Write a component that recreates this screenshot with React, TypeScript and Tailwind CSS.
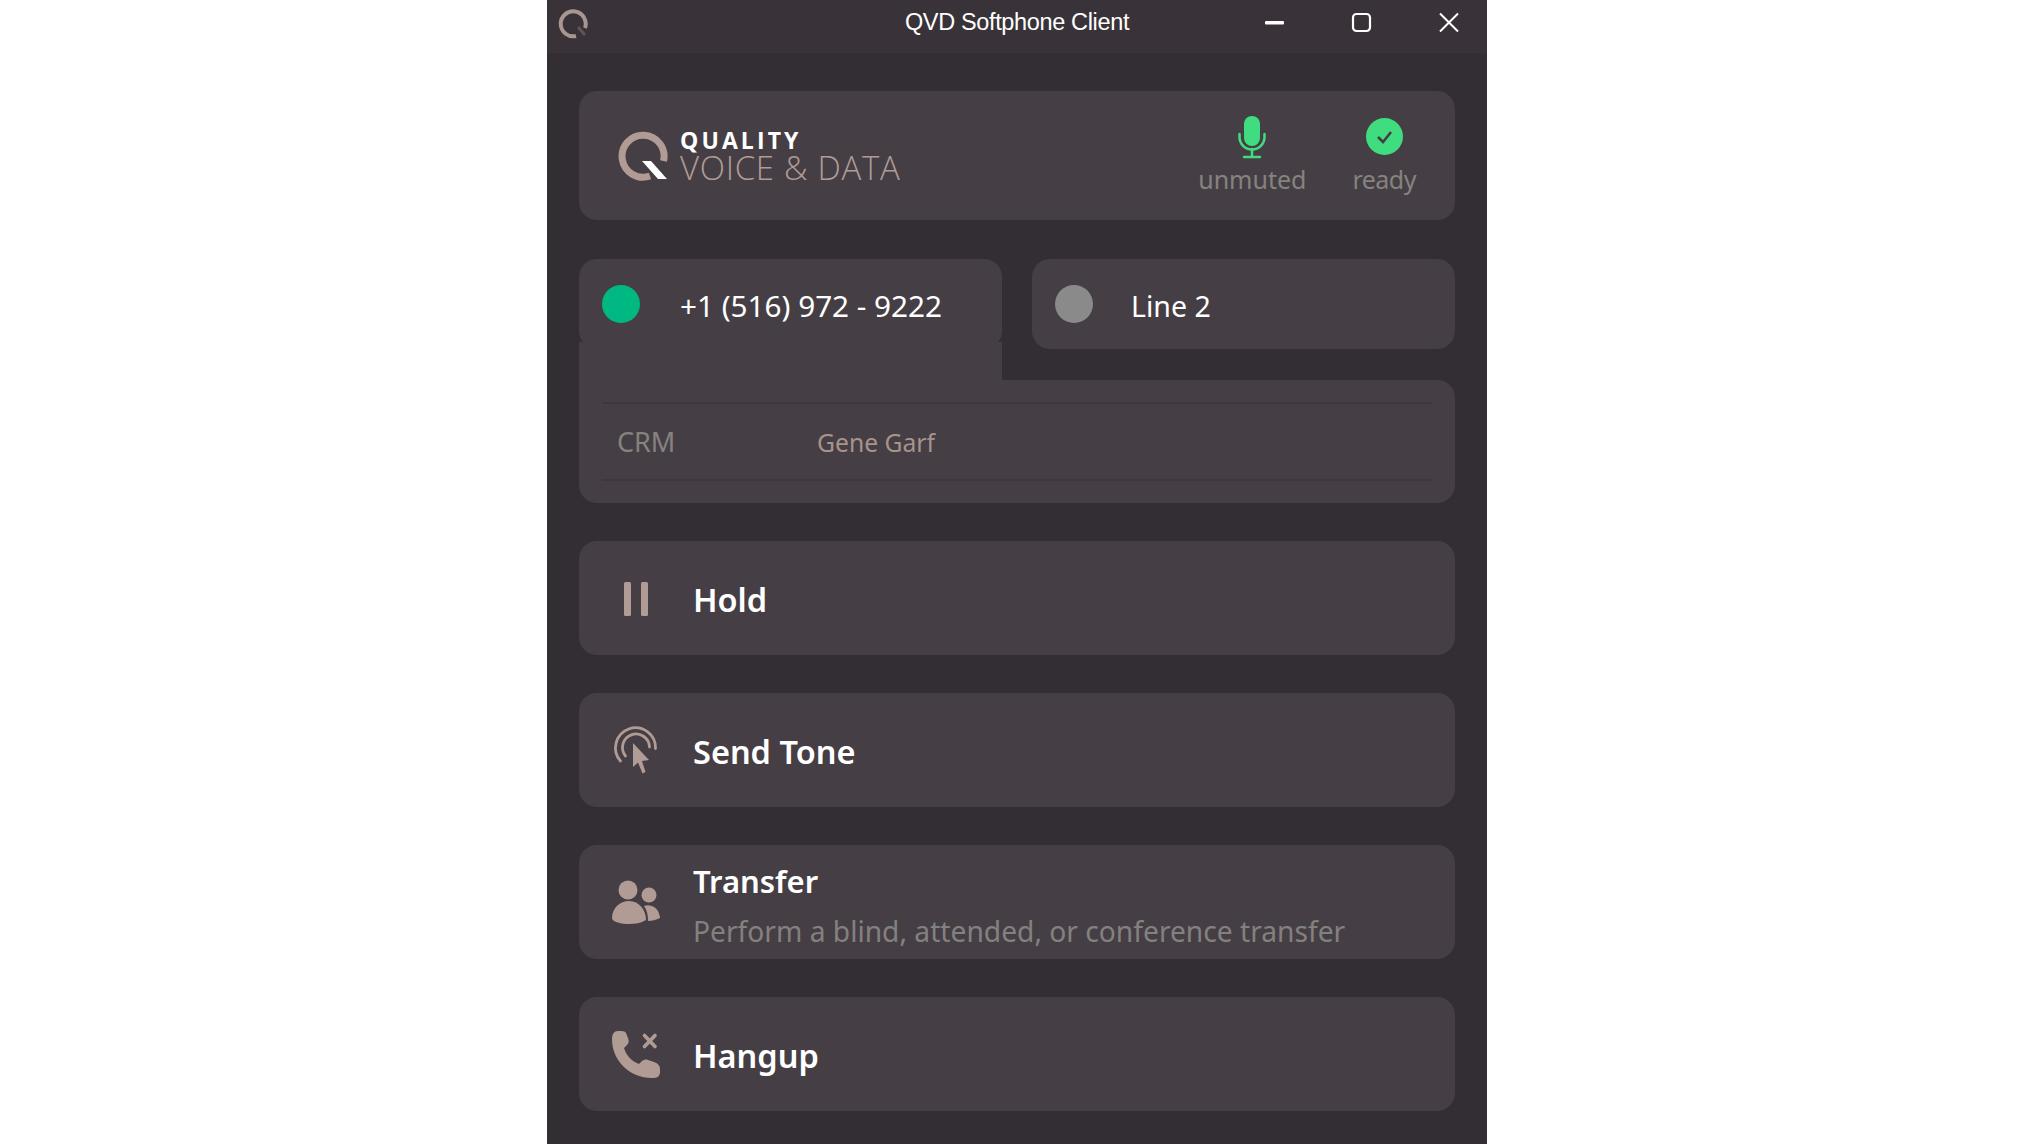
const card = "bg-[#453f45]";
const F = "[font-family:'Noto_Sans','Open_Sans',sans-serif]";

function Pause() {
  return (
    <svg width="60" height="60" viewBox="0 0 60 60" fill="#b09c95">
      <rect x="14" y="14" width="7" height="34" rx="1.5" />
      <rect x="31" y="14" width="7" height="34" rx="1.5" />
    </svg>
  );
}
function Tone() {
  return (
    <svg width="60" height="60" viewBox="0 0 60 60" fill="none" stroke="#b09c95" strokeWidth="2.800" strokeLinecap="round">
      <path d="M10.500 41A20 20 0 1 1 45.500 28.500" />
      <path d="M15.500 36A13.500 13.500 0 1 1 39.500 27" />
      <path d="M23 23L39 40L32 41L35.500 52L32.500 53.500L28 42.500L23 47z" fill="#b09c95" stroke="none" />
    </svg>
  );
}
function People() {
  return (
    <svg width="60" height="60" viewBox="0 0 60 60" fill="#b09c95">
      <circle cx="18" cy="18" r="9.500" />
      <circle cx="39" cy="23" r="7.500" />
      <path d="M2 46C2 36 10 29 19 29C29 29 36 38 36 48C31 51 25 52 19 52C12 52 2 50 2 46z" />
      <path d="M34 34C39 32 45 34 48 39C49 42 50 44 50 46C46 48 42 49 38 49C38 43 37 38 34 34z" />
    </svg>
  );
}
function Hang() {
  return (
    <svg width="60" height="60" viewBox="0 0 60 60" fill="#b09c95">
      <path d="M8 7c-4 0-6 3-6 8 0 22 18 39 40 39h2c4 0 6-3 6-6v-3c0-4-3-6-6-7l-6-2c-3-1-5 0-7 2l-2 2c-8-3-13-9-15-16l3-3c2-2 2-4 1-7l-2-5c-1-2-4-2-8-2z" />
      <path d="M34.500 11.500l10.500 11M45 11.500L34.500 22.500" stroke="#b09c95" strokeWidth="3.600" strokeLinecap="round" fill="none" />
    </svg>
  );
}
function Action({ icon, title, sub, titleClass }: { icon: React.ReactNode; title: string; sub?: string; titleClass?: string }) {
  return (
    <div className={`${card} h-[114px] rounded-[18px] flex items-center pl-[31px]`}>
      <div className="w-[60px] h-[60px] shrink-0">{icon}</div>
      <div className="ml-[23px] flex flex-col">
        <span className={`text-white font-semibold leading-[44px] ${titleClass ?? "text-[32.500px] mt-[3px]"}`}>{title}</span>
        {sub && <span className="text-[#83817f] text-[28.200px] leading-[38px] mt-[9px]">{sub}</span>}
      </div>
    </div>
  );
}
export default function App() {
  return (
    <div className="h-screen bg-white flex justify-center overflow-hidden pr-px">
      <div className={`w-[940px] h-[1144px] bg-[#332e33] flex flex-col ${F}`}>
        <div className="h-[53px] bg-[#393339] flex items-center relative shrink-0 pb-[8px]">
          <svg className="ml-[11px]" width="32" height="32" viewBox="0 0 32 32" fill="none">
            <path d="M27 21A12.500 12.500 0 1 0 18 29" stroke="#a89690" strokeWidth="4" />
            <path d="M20 20l7 8" stroke="#5d5557" strokeWidth="3" />
          </svg>
          <span className="absolute left-0 right-0 text-center text-white text-[23.500px] [font-family:'Liberation_Sans',sans-serif] tracking-[-0.35px]">QVD Softphone Client</span>
          <div className="ml-auto flex items-center">
            <svg width="24" height="24" viewBox="0 0 24 24" className="mr-[62px]"><rect x="2" y="10" width="19" height="3.500" rx="1" fill="white" /></svg>
            <svg width="24" height="24" viewBox="0 0 24 24" className="mr-[64px]" fill="none"><rect x="4" y="3" width="17" height="17" rx="3.500" stroke="white" strokeWidth="2.200" /></svg>
            <svg width="24" height="24" viewBox="0 0 24 24" className="mr-[26px]" fill="none"><path d="M3 2.500l18 18M21 2.500L3 20.500" stroke="white" strokeWidth="2" /></svg>
          </div>
        </div>
        <div className="flex flex-col px-[32px] pt-[38px]">
          <div className={`${card} h-[129px] rounded-[18px] flex items-center pl-[39px] pr-[39px]`}>
            <svg width="50" height="50" viewBox="0 0 50 50" fill="none" className="shrink-0">
              <path d="M45.500 30A21 21 0 1 0 32 45" stroke="#b09c95" strokeWidth="7" />
              <path d="M24 30h9L49 48h-9z" fill="white" />
            </svg>
            <div className="ml-[12px] flex flex-col -mt-[1px]">
              <span className="text-white font-bold text-[23px] leading-[26px] tracking-[3.100px] [font-family:'Open_Sans',sans-serif]">QUALITY</span>
              <span className="text-[#b09c95] font-light text-[33px] leading-[30px] tracking-[0.700px] [font-family:'Open_Sans',sans-serif]">VOICE &amp; DATA</span>
            </div>
            <div className="ml-auto flex items-start gap-[46px]">
              <div className="flex flex-col items-center">
                <svg width="28" height="44" viewBox="0 0 28 44" fill="none">
                  <rect x="6" y="1" width="16" height="30" rx="8" fill="#40dd80" />
                  <path d="M1.500 19v3a12.500 12.500 0 0 0 25 0v-3" stroke="#40dd80" strokeWidth="2.500" strokeLinecap="round" />
                  <path d="M14 34v8M6 42h16" stroke="#40dd80" strokeWidth="2.500" strokeLinecap="round" />
                </svg>
                <span className="text-[#85827f] text-[25px] leading-[36px] mt-[2px]">unmuted</span>
              </div>
              <div className="flex flex-col items-center">
                <svg width="37" height="44" viewBox="0 0 37 44" fill="none">
                  <circle cx="18.500" cy="21.500" r="18.500" fill="#40dd80" />
                  <path d="M12 22l5 5 8-10" stroke="#453f45" strokeWidth="2.600" />
                </svg>
                <span className="text-[#85827f] text-[25px] leading-[36px] mt-[2px] tracking-[-0.5px]">ready</span>
              </div>
            </div>
          </div>
          <div className="mt-[39px] flex gap-[30px] items-start">
            <div className="w-[423px]">
              <div className={`${card} h-[90px] rounded-[18px] flex items-center pl-[23px]`}>
                <span className="w-[38px] h-[38px] rounded-full bg-[#00b982] shrink-0 -mt-[1px]" />
                <span className="ml-[40px] text-white text-[29.700px] mt-[5px]">+1 (516) 972 - 9222</span>
              </div>
              <div className={`${card} h-[38px] -mt-[7px]`} />
            </div>
            <div className={`${card} h-[90px] w-[423px] rounded-[18px] flex items-center pl-[23px]`}>
              <span className="w-[38px] h-[38px] rounded-full bg-[#8a8a8a] shrink-0 -mt-[1px]" />
              <span className="ml-[38px] text-white text-[28.500px] mt-[5px]">Line 2</span>
            </div>
          </div>
          <div className={`${card} h-[123px] rounded-b-[18px] rounded-tr-[18px] px-[23px] pt-[22px]`}>
            <div className="h-[79px] border-y-2 border-[#3e383e] flex items-center pl-[15px] pt-[2px]">
              <span className="text-[#85827f] w-[200px] text-[27px]">CRM</span>
              <span className="text-[#a8938c] text-[24.700px]">Gene Garf</span>
            </div>
          </div>
          <div className="mt-[38px] flex flex-col gap-[38px]">
            <Action icon={<Pause />} title="Hold" />
            <Action icon={<Tone />} title="Send Tone" />
            <Action icon={<People />} title="Transfer" titleClass="text-[31px] mt-[5px]" sub="Perform a blind, attended, or conference transfer" />
            <Action icon={<Hang />} title="Hangup" />
          </div>
        </div>
      </div>
    </div>
  );
}
